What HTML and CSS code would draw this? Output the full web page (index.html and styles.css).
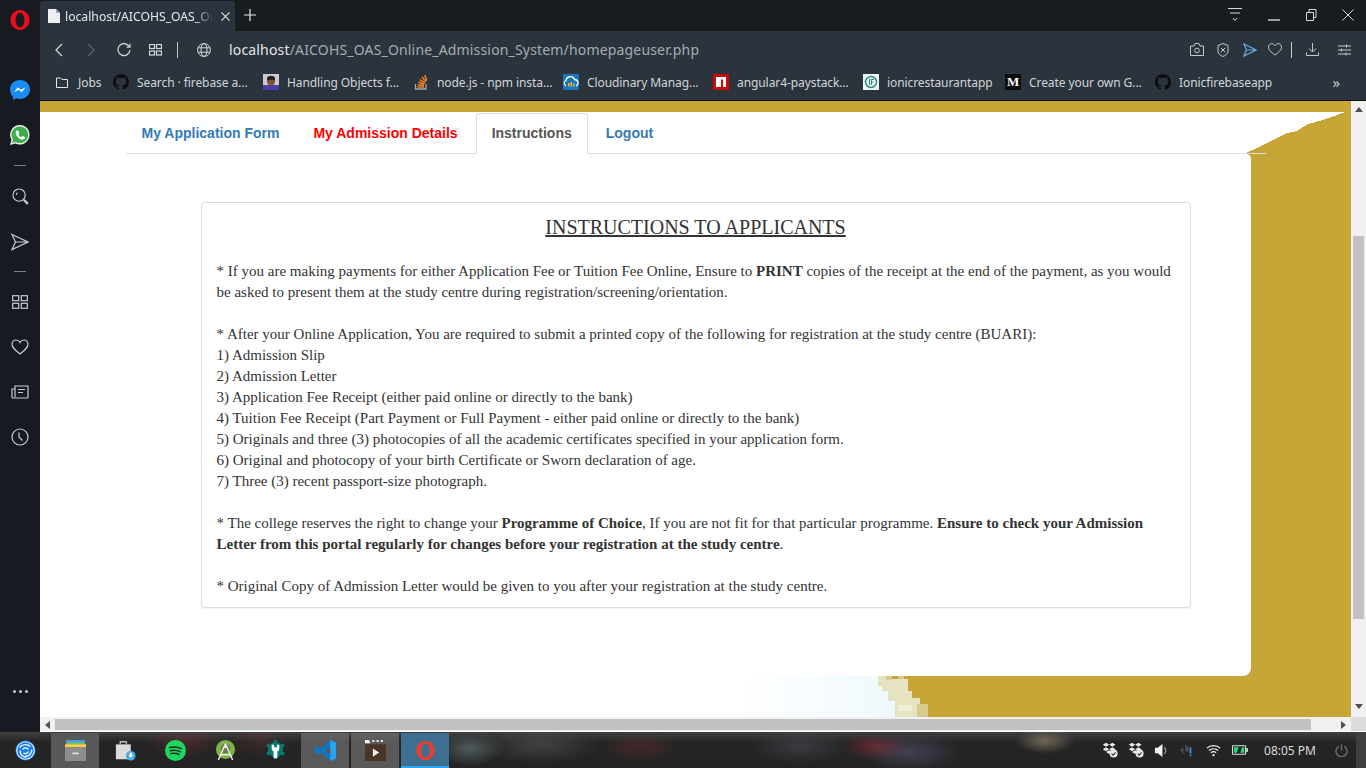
FILE: index.html
```html
<!DOCTYPE html>
<html lang="en">
<head>
<meta charset="utf-8">
<title>AICOHS OAS</title>
<link rel="stylesheet" href="styles.css">
</head>
<body>
<svg class="defs" width="0" height="0" aria-hidden="true">
  <defs>
    <symbol id="gh" viewBox="0 0 16 16"><path fill="#0e0e0e" d="M8 0C3.58 0 0 3.58 0 8c0 3.54 2.29 6.53 5.47 7.59.4.07.55-.17.55-.38 0-.19-.01-.82-.01-1.49-2.01.37-2.53-.49-2.69-.94-.09-.23-.48-.94-.82-1.13-.28-.15-.68-.52-.01-.53.63-.01 1.08.58 1.23.82.72 1.21 1.87.87 2.33.66.07-.52.28-.87.51-1.07-1.78-.2-3.64-.89-3.64-3.95 0-.87.31-1.59.82-2.15-.08-.2-.36-1.02.08-2.12 0 0 .67-.21 2.2.82.64-.18 1.32-.27 2-.27.68 0 1.36.09 2 .27 1.53-1.04 2.2-.82 2.2-.82.44 1.1.16 1.92.08 2.12.51.56.82 1.27.82 2.15 0 3.07-1.87 3.75-3.65 3.95.29.25.54.73.54 1.48 0 1.07-.01 1.93-.01 2.2 0 .21.15.46.55.38A8.013 8.013 0 0016 8c0-4.42-3.58-8-8-8z"/></symbol>
    <symbol id="opera" viewBox="0 0 24 24"><path fill-rule="evenodd" d="M12 1C6 1 1.500 6 1.500 12S6 23 12 23 22.500 18 22.500 12 18 1 12 1zM12 4c2.700 0 4.800 3.600 4.800 8s-2.100 8-4.800 8-4.800-3.600-4.800-8 2.100-8 4.800-8z"/></symbol>
    <symbol id="drop" viewBox="0 0 20 20"><path fill="#e8e8e8" d="M5 1l4 2.500L5 6 1 3.500zM13 1l4 2.500L13 6 9 3.500zM5 6.500l4 2.500-4 2.500L1 9zM13 6.500L17 9l-4 2.500L9 9zM5 12.500l4-2.200 3 2-3 2.700z"/><circle cx="14.500" cy="14.500" r="5" fill="#e8e8e8"/><path d="M12 14.500l2 2 3-3.500" fill="none" stroke="#333" stroke-width="1.300"/></symbol>
  </defs>
</svg>
<div class="screen">
  <div class="desktop">
    <aside class="sidebar">
      <svg class="side-logo" viewBox="0 0 24 24" fill="#e3101e"><use href="#opera"/></svg>
      <svg class="side-app side-messenger" viewBox="0 0 20 20"><path fill="#1a8cf5" d="M10 0C4.400 0 0 4.100 0 9.600c0 2.900 1.200 5.400 3.100 7.100V20l3-1.700c1.200.4 2.500.6 3.900.6 5.600 0 10-4.100 10-9.400S15.600 0 10 0z"/><path fill="#fff" d="M4 12.300l3.900-5 3 2.500 4.800-2.600-3.900 5-3-2.500z"/></svg>
      <svg class="side-app side-whatsapp" viewBox="0 0 20 20"><path fill="#e8efe9" d="M10 0a9.800 9.800 0 0 0-8.500 14.800L0 20l5.400-1.400A9.800 9.800 0 1 0 10 0z"/><path fill="#3dae4b" d="M10 1.500a8.300 8.300 0 0 0-7 12.900l-1 3.500 3.600-1A8.300 8.300 0 1 0 10 1.500z"/><path fill="#fff" d="M7.200 5.200c-.5 0-1.500.9-1.500 2.500 0 3 3.700 6.800 6.900 6.800 1.500 0 2.400-1 2.400-1.900 0-.4-2.100-1.500-2.400-1.500-.4 0-.9 1.100-1.300 1.100-.8 0-3-2.100-3-3 0-.4 1-.9 1-1.300 0-.3-1-2.700-2.100-2.700z"/></svg>
      <span class="side-rule side-rule-a"></span>
      <svg class="side-icon side-search" viewBox="0 0 18 18"><circle cx="7.500" cy="7.500" r="6.500"/><path d="M4.500 7.500A3 3 0 0 1 6 5"/><path d="M12.500 12.500l4.300 4.300" stroke-width="2.400"/></svg>
      <svg class="side-icon side-send" viewBox="0 0 18 18"><path d="M1 1.500L17 9 1 16.500 4.500 9zM4.500 9H17"/></svg>
      <span class="side-rule side-rule-b"></span>
      <svg class="side-icon side-grid" viewBox="0 0 16 14"><rect x=".7" y=".7" width="6" height="5"/><rect x="9.300" y=".7" width="6" height="5"/><rect x=".7" y="8.300" width="6" height="5"/><rect x="9.300" y="8.300" width="6" height="5"/></svg>
      <svg class="side-icon side-heart" viewBox="0 0 18 16"><path d="M9 15C4 11 1 8.500 1 5.200 1 2.800 2.800 1 5 1c1.700 0 3.200 1 4 2.600C9.800 2 11.300 1 13 1c2.200 0 4 1.800 4 4.200C17 8.500 14 11 9 15z"/></svg>
      <svg class="side-icon side-news" viewBox="0 0 18 14"><path d="M4 1h13v11a1 1 0 0 1-1 1H2a1 1 0 0 1-1-1V4h3zM4 4v8M7 4.500h7M7 7.500h5"/></svg>
      <svg class="side-icon side-clock" viewBox="0 0 18 18"><circle cx="9" cy="9" r="8"/><path d="M8 4.500V9l3.500 3.500"/></svg>
      <span class="side-more"><i></i><i></i><i></i></span>
    </aside>
    <div class="browser">
      <header class="tabstrip">
        <div class="tab">
          <svg class="tab-doc" viewBox="0 0 12 14"><path fill="#eceef0" d="M0 0h8l4 4v10H0z"/><path fill="#9aa3ab" d="M8 0v4h4z"/></svg>
          <span class="tab-title">localhost/AICOHS_OAS_Online_Admission_System/homepageuser.php</span>
          <svg class="tab-x" viewBox="0 0 10 10"><path d="M.5.500l9 9M9.500.500l-9 9"/></svg>
        </div>
        <svg class="tab-new" viewBox="0 0 12 12"><path d="M6 0v12M0 6h12"/></svg>
        <div class="win">
          <svg class="win-ico win-menu" viewBox="0 0 14 14"><path d="M0 .500h14M2 5h10M5 10l2 2.500L9 10"/></svg>
          <svg class="win-ico win-min" viewBox="0 0 12 12"><path d="M0 11h12" stroke-width="1.400"/></svg>
          <svg class="win-ico win-max" viewBox="0 0 12 12"><path d="M.5 3.500h7v8h-7zM3 3.500V.500h7v8H7.500"/></svg>
          <svg class="win-ico win-close" viewBox="0 0 12 12"><path d="M.5.500l11 11M11.500.500l-11 11"/></svg>
        </div>
      </header>
      <nav class="addressbar">
        <svg class="nav-ico nav-back" viewBox="0 0 8 14"><path d="M7 1L1 7l6 6"/></svg>
        <svg class="nav-ico nav-fwd" viewBox="0 0 8 14"><path d="M1 1l6 6-6 6"/></svg>
        <svg class="nav-ico nav-reload" viewBox="0 0 14 14"><path d="M12 3.200A6 6 0 1 0 13 7M13 .800v3.400H9.600"/></svg>
        <svg class="nav-ico nav-grid" viewBox="0 0 13 12"><rect x=".5" y=".5" width="5" height="4"/><rect x="7.500" y=".5" width="5" height="4"/><rect x=".5" y="7" width="5" height="4"/><rect x="7.500" y="7" width="5" height="4"/></svg>
        <span class="nav-sep"></span>
        <svg class="nav-ico nav-globe" viewBox="0 0 14 14"><circle cx="7" cy="7" r="6.400"/><ellipse cx="7" cy="7" rx="3" ry="6.400"/><path d="M1 4.800h12M1 9.200h12"/></svg>
        <div class="url"><span class="url-host">localhost</span>/AICOHS_OAS_Online_Admission_System/homepageuser.php</div>
        <div class="addr-tools">
          <svg class="tool tool-cam" viewBox="0 0 14 13"><path d="M.5 3h3.500l1-2.500h4L10 3h3.500v9.500H.5z"/><circle cx="7" cy="7.500" r="2.300"/></svg>
          <svg class="tool tool-shield" viewBox="0 0 12 14"><path d="M6 .5l5 2v6c0 2-2.500 4-5 5-2.500-1-5-3-5-5v-6zM3.800 4.800l4.400 4.400M8.200 4.800L3.800 9.200"/></svg>
          <svg class="tool tool-send" viewBox="0 0 14 14"><path d="M1 1l12 6-12 6 2.500-6zM3.500 7H13"/></svg>
          <svg class="tool tool-heart" viewBox="0 0 14 13"><path d="M7 12C3 9 .5 7 .5 4.200.5 2.200 2 .7 3.800.7 5.200.7 6.300 1.500 7 2.800 7.700 1.500 8.800.7 10.200.7c1.800 0 3.300 1.500 3.300 3.500C13.500 7 11 9 7 12z"/></svg>
          <span class="tool-sep"></span>
          <svg class="tool tool-down" viewBox="0 0 13 13"><path d="M6.500 0v8.500M3 5.500l3.500 3.500L10 5.500M.5 9.500v3h12v-3"/></svg>
          <svg class="tool tool-tune" viewBox="0 0 13 12"><path d="M0 2h13M0 6h13M0 10h13M8.500.5v3M3.500 4.500v3M8 8.500v3"/></svg>
        </div>
      </nav>
      <div class="bookmarks">
        <a class="bm bm-jobs"><svg class="bm-ico bm-folder" viewBox="0 0 12 11"><path d="M.5 1h4l1.500 1.500h5.500v8H.5z"/></svg><span>Jobs</span></a>
        <a class="bm"><svg class="bm-ico"><use href="#gh"/></svg><span>Search · firebase a...</span></a>
        <a class="bm"><svg class="bm-ico" viewBox="0 0 16 16"><rect width="16" height="16" fill="#c9c9cf"/><rect y="11" width="16" height="5" fill="#4a3fa8"/><ellipse cx="8" cy="7" rx="4" ry="5" fill="#7a5238"/><path d="M4 4c1-3 7-3 8 0v2H4z" fill="#2a211c"/></svg><span>Handling Objects f...</span></a>
        <a class="bm"><svg class="bm-ico" viewBox="0 0 16 16"><path fill="none" stroke="#a8a9ad" stroke-width="1.300" d="M2.500 10v5h10.500v-5"/><path fill="none" stroke="#f48024" stroke-width="1.500" d="M4.500 13h6.500M4.700 10.700l6.300.7M5.300 8.300l6 1.700M6.700 5.600l5.400 3.200M9 3l3.900 4.600M11.700 1l2 5.600"/></svg><span>node.js - npm insta...</span></a>
        <a class="bm"><svg class="bm-ico" viewBox="0 0 16 16"><rect width="16" height="16" rx="1" fill="#1b77bb"/><path d="M3 12a3 3 0 0 1 0-5.500 4.500 4.500 0 0 1 8.600-1A3.400 3.400 0 0 1 13 12" fill="none" stroke="#fff" stroke-width="1.300"/><path fill="#f7b425" d="M5 9h1.500v3.500H5zM7.500 8H9v4.500H7.500zM10 9.500h1.500v3H10z"/></svg><span>Cloudinary Manag...</span></a>
        <a class="bm"><svg class="bm-ico" viewBox="0 0 16 16"><rect width="16" height="16" fill="#c80a0a"/><path fill="#fff" d="M3 3h10v10h-3V5.500H8V13H3z"/></svg><span>angular4-paystack...</span></a>
        <a class="bm bm-short"><svg class="bm-ico" viewBox="0 0 16 16"><rect width="16" height="16" fill="#f1f4f2"/><circle cx="8" cy="8" r="5.500" fill="none" stroke="#25908c" stroke-width="1.500"/><path stroke="#25908c" d="M6.500 5v6M8.500 5v6M8.500 5.500H11M8.500 8H10.500" fill="none"/></svg><span>ionicrestaurantapp</span></a>
        <a class="bm"><span class="bm-medium">M</span><span>Create your own G...</span></a>
        <a class="bm"><svg class="bm-ico"><use href="#gh"/></svg><span>Ionicfirebaseapp</span></a>
        <span class="bm-more">»</span>
      </div>
      <div class="page-row">
        <div class="page-col">
          <main class="viewport">
            <svg class="art" viewBox="0 0 1311 616" width="1311" height="616" aria-hidden="true">
              <defs><linearGradient id="pale" x1="0" x2="1" y1="0" y2="0"><stop offset=".82" stop-color="#fff"/><stop offset="1" stop-color="#eff9fd"/></linearGradient></defs>
              <g shape-rendering="crispEdges">
                <path fill="#fff" d="M0 11H1305L1297 14 1283 19 1268 23 1257 30 1247 32 1235 38 1227 42 1217 47 1206 52H1100V575H0z"/>
                <path fill="url(#pale)" d="M0 575H838V585H842V590H848V600H855V616H0z"/>
                <path fill="#e6e3c1" d="M838 575H846V578H868V590H872V597H880V606H885V616H855V600H848V590H842V585H838z"/>
                <path fill="#d6cb8c" d="M877 603H888V616H877zM846 575H852V579H846zM858 575H864V578H858z"/>
                <path fill="#f1eed6" d="M858 604H872V610H858z"/>
              </g>
            </svg>
            <div class="content">
              <ul class="tabs">
                <li><a class="tablink tablink-blue">My Application Form</a></li>
                <li><a class="tablink tablink-red">My Admission Details</a></li>
                <li><a class="tablink tablink-active">Instructions</a></li>
                <li><a class="tablink tablink-blue">Logout</a></li>
              </ul>
              <section class="panel">
                <article class="card">
                  <h2 class="card-title">INSTRUCTIONS TO APPLICANTS</h2>
                  <p>* If you are making payments for either Application Fee or Tuition Fee Online, Ensure to <b>PRINT</b> copies of the receipt at the end of the payment, as you would be asked to present them at the study centre during registration/screening/orientation.</p>
                  <p>* After your Online Application, You are required to submit a printed copy of the following for registration at the study centre (BUARI):<br>1) Admission Slip<br>2) Admission Letter<br>3) Application Fee Receipt (either paid online or directly to the bank)<br>4) Tuition Fee Receipt (Part Payment or Full Payment - either paid online or directly to the bank)<br>5) Originals and three (3) photocopies of all the academic certificates specified in your application form.<br>6) Original and photocopy of your birth Certificate or Sworn declaration of age.<br>7) Three (3) recent passport-size photograph.</p>
                  <p>* The college reserves the right to change your <b>Programme of Choice</b>, If you are not fit for that particular programme. <b>Ensure to check your Admission Letter from this portal regularly for changes before your registration at the study centre</b>.</p>
                  <p>* Original Copy of Admission Letter would be given to you after your registration at the study centre.</p>
                </article>
              </section>
            </div>
          </main>
          <div class="hscroll">
            <svg class="arrow arrow-left" viewBox="0 0 6 8"><path d="M6 0v8L1 4z"/></svg>
            <span class="hthumb"></span>
            <svg class="arrow arrow-right" viewBox="0 0 6 8"><path d="M0 0v8l5-4z"/></svg>
          </div>
        </div>
        <div class="vcol">
          <div class="vscroll">
            <svg class="arrow arrow-up" viewBox="0 0 8 6"><path d="M0 5h8L4 0z"/></svg>
            <span class="vthumb"></span>
            <svg class="arrow arrow-down" viewBox="0 0 8 6"><path d="M0 0h8L4 5z"/></svg>
          </div>
          <span class="corner"></span>
        </div>
      </div>
    </div>
  </div>
  <footer class="taskbar">
    <div class="launch">
      <span class="task"><svg class="task-ico" viewBox="0 0 22 22"><circle cx="11" cy="11" r="10.500" fill="#1a7fe6"/><circle cx="11" cy="11" r="9.200" fill="none" stroke="#d5eeff" stroke-width="1.200"/><path d="M5 8c2-3.500 8-4.500 11-1M17.500 10c.5 4-3 7.500-7 7M12 18c-4 0-7-3-6.500-7M8 10c1-2 5-2.500 6 0M14 12c-.5 2-3.500 3-5 1.500" fill="none" stroke="#e5f4fe" stroke-width="1.500"/></svg></span>
      <span class="task task-on"><svg class="task-ico" viewBox="0 0 20 20"><path fill="#4b9fe0" d="M1 0h18v2H1z"/><path fill="#67c088" d="M1 2h18v2H1z"/><path fill="#f7d148" d="M0 4h20v3H0z"/><path fill="#8d8d8d" d="M0 7h20v13H0z"/><path fill="#e8e8e8" d="M7 12h6v1.500H7z"/></svg></span>
      <span class="task"><svg class="task-ico" viewBox="0 0 24 24"><path fill="#dcdcdc" d="M1 5h17v17H1z"/><path fill="none" stroke="#bdbdbd" stroke-width="1.500" d="M6 5V2h7v3"/><circle cx="18" cy="18" r="5.500" fill="#46a9e2"/><path fill="#fff" d="M16.800 14.500h2.400v3h1.600L18 20.500l-2.800-3h1.600z"/></svg></span>
      <span class="task"><svg class="task-ico" viewBox="0 0 20 20"><circle cx="10" cy="10" r="10" fill="#1ed760"/><path d="M4.500 7.200c4-1 8-.8 11 1M5 10.200c3.500-.8 7-.5 9.500 1M5.500 13c3-.6 5.500-.3 8 .9" fill="none" stroke="#1a2a20" stroke-width="1.400" stroke-linecap="round"/></svg></span>
      <span class="task"><svg class="task-ico" viewBox="0 0 22 22"><circle cx="11" cy="10" r="10" fill="#7cb342"/><circle cx="11" cy="9" r="5" fill="#6b7a55"/><path d="M11 4L3.500 21M11 4l7.500 17M6 15.500h10" fill="none" stroke="#eee" stroke-width="1.500"/><circle cx="11" cy="7" r="1.700" fill="#e5e5e5"/></svg></span>
      <span class="task"><svg class="task-ico" viewBox="0 0 22 22"><circle cx="11" cy="10" r="8" fill="#067a71"/><path stroke="#067a71" stroke-width="3.500" d="M11 0v20M2 5l18 10M20 5L2 15"/><path fill="#fff" d="M7 5h2.500v2.500h3V5H15v4c0 1.800-1.200 2.800-2 3.100V18c0 1.500-4 1.500-4 0v-5.900C8.200 11.800 7 10.800 7 9z"/></svg></span>
      <span class="task task-grey"><svg class="task-ico" viewBox="0 0 24 24"><path fill="#0e78c8" d="M17.500 0L24 3v18l-6.500 3L7 14l-4 3-3-1.500v-7L3 7l4 3zM17.500 7l-6 5 6 5z"/><path fill="#2aa3ee" d="M17.500 0L24 3v18l-6.500 3z"/></svg></span>
      <span class="task task-grey"><svg class="task-ico" viewBox="0 0 20 20"><path fill="#4a3527" d="M0 4h20v16H0z"/><path fill="#efefef" d="M0 0h4l1 3H0zM7 0h2v2H7zM11 0h2v2h-2zM15 0h2v2h-2zM7.500 8l6 4-6 4z"/></svg></span>
      <span class="task task-active"><svg class="task-ico" viewBox="0 0 24 24" fill="#e5402f"><use href="#opera"/></svg></span>
    </div>
    <div class="tray">
      <svg class="tray-ico"><use href="#drop"/></svg>
      <svg class="tray-ico"><use href="#drop"/></svg>
      <svg class="tray-ico tray-sound" viewBox="0 0 16 16"><path fill="#f2f2f2" d="M1 5h3l5-4v14l-5-4H1z"/><path fill="none" stroke="#9a9a9a" stroke-width="1.400" d="M11 4.500c2 2 2 5 0 7"/></svg>
      <svg class="tray-ico tray-net" viewBox="0 0 16 16"><path fill="#4a4d52" d="M6 1l4 4v5H6zM0 8l4-3v8z"/><path fill="#3d93e8" d="M11 5h2v7h-2zM11 13h2v2h-2z"/></svg>
      <svg class="tray-ico tray-wifi" viewBox="0 0 16 14"><path fill="none" stroke="#f0f0f0" stroke-width="1.300" d="M.8 4.500c4-3.700 10.400-3.700 14.400 0M3 7c2.800-2.500 7.200-2.500 10 0M5.200 9.400c1.500-1.300 4.100-1.300 5.600 0"/><circle cx="8" cy="12" r="1.200" fill="#f0f0f0"/></svg>
      <svg class="tray-ico tray-batt" viewBox="0 0 17 12"><path fill="none" stroke="#f0f0f0" d="M.5 1.500h14v9H.5zM15 4.500h1.500v3H15z"/><path fill="#1ee07a" d="M2 3h5L5 9H2zM8 9h5V3h-2.500L9 9z"/></svg>
      <span class="clock">08:05 PM</span>
      <svg class="tray-power" viewBox="0 0 14 14"><path d="M4 2.500A6 6 0 1 0 10 2.500M7 .5V7"/></svg>
      <span class="tray-end"></span>
    </div>
  </footer>
</div>
</body>
</html>
```
FILE: styles.css
```css
* { box-sizing: border-box; }
html, body { margin: 0; padding: 0; width: 1366px; height: 768px; overflow: hidden; }
body { font-family: "Noto Sans", sans-serif; background: #fff; }
svg { display: block; flex: none; }
.defs { position: absolute; }
.screen { display: flex; flex-direction: column; width: 1366px; height: 768px; }
.desktop { display: flex; height: 732px; }

/* Opera side panel */
.sidebar { width: 40px; flex: none; background: #171b21; display: flex; flex-direction: column; align-items: center; color: #c9ccd0; }
.side-logo { width: 22px; height: 22px; margin-top: 9px; }
.side-app { width: 20px; height: 20px; }
.side-messenger { margin-top: 49px; }
.side-whatsapp { margin-top: 25px; }
.side-rule { width: 12px; height: 1px; background: #7d8287; }
.side-rule-a { margin-top: 20px; }
.side-icon { fill: none; stroke: #c9ccd0; stroke-width: 1.200; }
.side-search { width: 17px; height: 17px; margin-top: 22px; }
.side-send { width: 18px; height: 18px; margin-top: 28px; }
.side-rule-b { margin-top: 20px; }
.side-grid { width: 16px; height: 14px; margin-top: 23px; }
.side-heart { width: 18px; height: 16px; margin-top: 30px; }
.side-news { width: 18px; height: 14px; margin-top: 30px; }
.side-clock { width: 18px; height: 18px; margin-top: 29px; }
.side-more { display: flex; gap: 3px; margin-top: 244px; }
.side-more i { width: 3px; height: 3px; border-radius: 50%; background: #c9ccd0; display: block; }

.browser { flex: 1; min-width: 0; display: flex; flex-direction: column; }

/* Tab strip */
.tabstrip { height: 31px; flex: none; background: #181c21; display: flex; align-items: flex-end; }
.tab { width: 195px; height: 30px; background: #2b343e; border-radius: 3px 3px 0 0; display: flex; align-items: center; padding-left: 8px; color: #e6e8ea; }
.tab-doc { width: 12px; height: 14px; margin-right: 5px; }
.tab-title { width: 148px; white-space: nowrap; overflow: hidden; font-size: 12.200px; -webkit-mask-image: linear-gradient(90deg, #000 88%, transparent); mask-image: linear-gradient(90deg, #000 88%, transparent); }
.tab-x { width: 9px; height: 9px; margin-left: 8px; fill: none; stroke: #e6e8ea; stroke-width: 1.200; }
.tab-new { width: 12px; height: 12px; margin: 0 0 10px 9px; fill: none; stroke: #e6e8ea; stroke-width: 1.200; }
.win { margin-left: auto; display: flex; align-items: center; height: 31px; padding-bottom: 2px; }
.win-ico { fill: none; stroke: #d5d8da; stroke-width: 1; }
.win-menu { width: 14px; height: 14px; margin-right: 26px; }
.win-min { width: 12px; height: 12px; margin-right: 26px; }
.win-max { width: 12px; height: 12px; margin-right: 24px; }
.win-close { width: 12px; height: 12px; margin-right: 12px; }

/* Address bar */
.addressbar { height: 37px; flex: none; background: #2b343d; display: flex; align-items: center; padding: 0 0 0 15px; color: #ccd0d3; }
.nav-ico { fill: none; stroke: #d7dadc; stroke-width: 1.200; }
.nav-back { width: 8px; height: 14px; }
.nav-fwd { width: 8px; height: 14px; margin-left: 24px; stroke: #59626a; }
.nav-reload { width: 14px; height: 14px; margin-left: 22px; }
.nav-grid { width: 13px; height: 12px; margin-left: 18px; }
.nav-sep { width: 1px; height: 16px; background: #c3c7ca; margin-left: 15px; }
.nav-globe { width: 14px; height: 14px; margin-left: 19px; stroke-width: 1; }
.url { margin-left: 18px; font-size: 14px; letter-spacing: .17px; color: #a5adb3; white-space: nowrap; }
.url-host { color: #e4e6e8; }
.addr-tools { margin-left: auto; display: flex; align-items: center; padding-right: 15px; }
.tool { fill: none; stroke: #c4c9cc; stroke-width: 1; }
.tool-cam { width: 14px; height: 13px; }
.tool-shield { width: 12px; height: 14px; margin-left: 13px; }
.tool-send { width: 14px; height: 14px; margin-left: 14px; stroke: #63aedb; stroke-width: 1.200; }
.tool-heart { width: 14px; height: 13px; margin-left: 11px; }
.tool-sep { width: 1px; height: 16px; background: #c4c9cc; margin-left: 9px; }
.tool-down { width: 13px; height: 13px; margin-left: 14px; }
.tool-tune { width: 13px; height: 12px; margin-left: 19px; }

/* Bookmarks bar */
.bookmarks { height: 33px; flex: none; background: #2b343d; border-bottom: 1px solid #0f1215; display: flex; align-items: center; padding: 0 0 4px 16px; color: #d2d5d8; font-size: 12px; letter-spacing: -.08px; }
.bm { width: 150px; flex: none; display: flex; align-items: center; gap: 8px; white-space: nowrap; }
.bm-jobs { width: 57px; gap: 10px; }
.bm-short { width: 142px; }
.bm-ico { width: 16px; height: 16px; }
.bm-folder { width: 12px; height: 11px; fill: none; stroke: #e4e6e8; stroke-width: 1; }
.bm-medium { width: 16px; height: 16px; background: #0c0c0c; color: #fff; font: bold 13px/16px "Liberation Serif", serif; text-align: center; }
.bm-more { margin-left: auto; margin-right: 26px; font-size: 15px; color: #c4c8cb; }

/* Page */
.page-row { flex: 1; min-height: 0; display: flex; }
.page-col { flex: 1; min-width: 0; display: flex; flex-direction: column; }
.viewport { position: relative; height: 616px; flex: none; overflow: hidden; background: #c5a535; }
.art { position: absolute; left: 0; top: 0; }
.content { position: relative; padding: 11px 0 0 86px; font-family: "Liberation Serif", serif; color: #333; }
.tabs { list-style: none; margin: 0; padding: 0; width: 1140px; height: 42px; display: flex; border-bottom: 1px solid #ddd; font: bold 14px/20px "Liberation Sans", sans-serif; }
.tabs li { margin-right: 2px; height: 42px; padding-top: 1px; }
.tablink { display: block; height: 41px; padding: 9px 15.500px 11px 14.500px; border: 1px solid transparent; border-radius: 4px 4px 0 0; }
.tablink-blue { color: #337ab7; }
.tablink-red { color: #f00; }
.tablink-active { color: #555; background: #fff; border-color: #ddd #ddd #fff; }
.panel { width: 1125px; height: 522px; background: #fff; border-radius: 0 5px 8px 8px; padding: 48px 60px 0 75px; }
.card { height: 406px; background: #fff; border: 1px solid #ddd; border-radius: 4px; box-shadow: 0 1px 1px rgba(0,0,0,.05); padding: 11px 15.500px 0 14.500px; font-size: 15px; line-height: 21px; }
.card-title { margin: 0 0 20px; font-size: 20px; line-height: 27px; font-weight: 400; text-align: center; text-decoration: underline; }
.card p { margin: 0 0 21px; }

/* Scrollbars */
.hscroll { height: 15px; flex: none; background: #f1f1f1; display: flex; align-items: center; padding-top: 1px; border-bottom: 1px solid #fff; }
.hthumb { width: 1256px; height: 11px; background: #c1c1c1; margin: 0 0 0 5px; }
.vcol { width: 15px; flex: none; display: flex; flex-direction: column; }
.vscroll { height: 616px; background: #f1f1f1; position: relative; display: flex; flex-direction: column; align-items: center; padding-top: 6px; }
.vthumb { width: 11px; height: 383px; background: #c1c1c1; margin-top: 123px; }
.corner { height: 15px; background: #dcdcdc; border-bottom: 1px solid #fff; }
.arrow { fill: #505050; }
.arrow-left { width: 6px; height: 8px; margin-left: 4px; }
.arrow-right { width: 6px; height: 8px; margin-left: 30px; }
.arrow-up { width: 8px; height: 6px; }
.arrow-down { width: 8px; height: 6px; margin-top: 85px; }

/* Taskbar */
.taskbar { height: 36px; flex: none; display: flex; align-items: stretch; color: #e2e2e2;
  background:
    linear-gradient(180deg, rgba(80,80,80,.6), rgba(40,40,40,0) 30%),
    radial-gradient(ellipse 30px 14px at 1045px 8px, rgba(170,155,125,.6), transparent),
    radial-gradient(ellipse 50px 20px at 910px 20px, rgba(110,105,150,.4), transparent),
    radial-gradient(ellipse 50px 18px at 800px 14px, rgba(110,110,130,.3), transparent),
    radial-gradient(ellipse 34px 18px at 470px 16px, rgba(130,160,160,.45), transparent),
    radial-gradient(ellipse 60px 20px at 540px 12px, rgba(120,120,130,.35), transparent),
    radial-gradient(ellipse 34px 14px at 875px 14px, rgba(170,40,50,.5), transparent),
    radial-gradient(ellipse 40px 16px at 640px 14px, rgba(140,50,50,.3), transparent),
    radial-gradient(ellipse 40px 18px at 185px 8px, rgba(140,50,50,.4), transparent),
    radial-gradient(ellipse 40px 18px at 260px 8px, rgba(120,50,50,.3), transparent),
    #242424; }
.launch { display: flex; }
.task { width: 50px; display: flex; align-items: center; justify-content: center; margin-top: 1px; padding: 0 1px; background-clip: content-box; }
.task-on { background-color: #585858; }
.task-grey { background-color: rgba(125,125,125,.6); }
.task-active { background-color: #3f6f90; position: relative; }
.task-active::after { content: ""; position: absolute; left: 1px; right: 1px; bottom: 0; height: 2px; background: #2ca7f8; }
.task-ico { width: 21px; height: 21px; }
.tray { margin-left: auto; display: flex; align-items: center; }
.tray-ico { width: 16px; height: 16px; margin-right: 10px; }
.tray-sound { width: 15px; height: 15px; margin-right: 11px; }
.tray-net { width: 14px; height: 14px; margin-right: 12px; }
.tray-wifi { width: 15px; height: 13px; margin-right: 11px; }
.tray-batt { width: 16px; height: 12px; margin-right: 16px; }
.clock { font-size: 12px; color: #dcdcdc; white-space: nowrap; }
.tray-power { width: 13px; height: 13px; margin-left: 19px; fill: none; stroke: #6a6e72; stroke-width: 1.500; }
.tray-end { width: 10px; align-self: stretch; margin: 1px 0 0 8px; background: #3f3f3f; }
```
